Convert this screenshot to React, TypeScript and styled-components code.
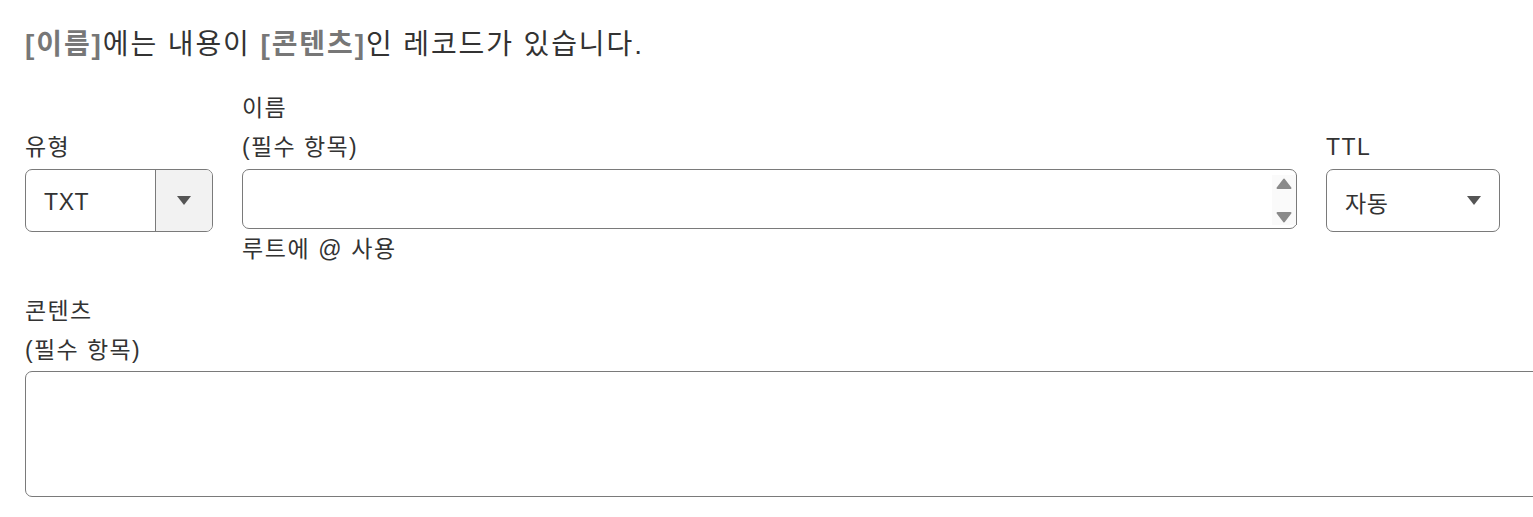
import React from "react";
import styled, { createGlobalStyle } from "styled-components";

const GlobalStyle = createGlobalStyle`
  html, body {
    margin: 0;
    padding: 0;
    overflow: hidden;
    background: #ffffff;
  }
  body {
    font-family: "Liberation Sans", "Noto Sans CJK KR", sans-serif;
    color: #333333;
  }
`;

interface ISelectBox {
  value: string;
  width: number;
  split?: boolean;
}

function SelectBox({ value, width, split }: ISelectBox) {
  return (
    <S.Select $width={width}>
      <span className="select__value">{value}</span>
      <S.SelectArrow $split={split}>
        <svg width="14" height="9" viewBox="0 0 14 9">
          <path d="M0 0 L14 0 L7 9 Z" fill="#555555" />
        </svg>
      </S.SelectArrow>
    </S.Select>
  );
}

export default function App() {
  return (
    <>
      <GlobalStyle />
      <S.Page>
        <S.Heading>
          <b>[이름]</b>에는 내용이 <b>[콘텐츠]</b>인 레코드가 있습니다.
        </S.Heading>
        <S.FieldGrid>
          <S.Label $col={1}>유형</S.Label>
          <S.Label $col={2}>
            이름
            <br />
            (필수 항목)
          </S.Label>
          <S.Label $col={3}>TTL</S.Label>

          <SelectBox value="TXT" width={188} split />
          <S.NameInput>
            <S.Spinner>
              <svg width="16" height="11" viewBox="0 0 16 11">
                <path d="M1.5 10 L8 1.5 L14.5 10 Z" fill="#8a8a8a" strokeLinejoin="round" stroke="#8a8a8a" strokeWidth="2" />
              </svg>
              <svg width="16" height="11" viewBox="0 0 16 11">
                <path d="M1.5 1 L14.5 1 L8 9.5 Z" fill="#8a8a8a" strokeLinejoin="round" stroke="#8a8a8a" strokeWidth="2" />
              </svg>
            </S.Spinner>
          </S.NameInput>
          <SelectBox value="자동" width={174} />

          <S.Hint>루트에 @ 사용</S.Hint>
        </S.FieldGrid>

        <S.ContentField>
          <S.Label>
            콘텐츠
            <br />
            (필수 항목)
          </S.Label>
          <S.TextArea />
        </S.ContentField>
      </S.Page>
    </>
  );
}

const S = {
  Page: styled.div`
    padding: 27px 0 0 25px;
    width: 1600px;
  `,
  Heading: styled.div`
    font-size: 28px;
    line-height: 36px;
    letter-spacing: 1.9px;
    color: #333333;
    b {
      color: #777777;
      font-weight: 700;
    }
  `,
  FieldGrid: styled.div`
    display: grid;
    grid-template-columns: 188px 1055px 174px;
    column-gap: 29px;
    margin-top: 26px;
  `,
  Label: styled.div<{ $col?: number }>`
    align-self: ${(p) => (p.$col ? "end" : "flex-start")};
    grid-row: ${(p) => (p.$col ? 1 : "auto")};
    grid-column: ${(p) => p.$col ?? "auto"};
    font-size: 23px;
    line-height: 39px;
    letter-spacing: 1.4px;
    color: #333333;
    padding-bottom: 2px;
  `,
  Select: styled.div<{ $width: number }>`
    grid-row: 2;
    width: ${(p) => p.$width}px;
    height: 63px;
    box-sizing: border-box;
    border: 1px solid #7a7a7a;
    border-radius: 7px;
    display: flex;
    align-items: stretch;
    overflow: hidden;
    .select__value {
      flex: 1;
      display: flex;
      align-items: center;
      padding: 3px 0 0 18px;
      font-size: 23px;
      letter-spacing: 0.6px;
      color: #333333;
    }
  `,
  SelectArrow: styled.div<{ $split?: boolean }>`
    width: ${(p) => (p.$split ? "56px" : "50px")};
    display: flex;
    align-items: center;
    justify-content: center;
    background: ${(p) => (p.$split ? "#f2f2f2" : "transparent")};
    border-left: ${(p) => (p.$split ? "1px solid #7a7a7a" : "none")};
  `,
  NameInput: styled.div`
    grid-row: 2;
    position: relative;
    height: 60px;
    box-sizing: border-box;
    border: 1px solid #7a7a7a;
    border-radius: 7px;
  `,
  Spinner: styled.div`
    position: absolute;
    top: 5px;
    bottom: 3px;
    right: -1px;
    width: 25px;
    background: #fafafa;
    border-right: 1px solid #7a7a7a;
    display: flex;
    flex-direction: column;
    justify-content: space-between;
    align-items: center;
    padding: 3px 0 2px;
    box-sizing: border-box;
  `,
  Hint: styled.div`
    grid-row: 3;
    grid-column: 2;
    font-size: 23px;
    line-height: 34px;
    letter-spacing: 1.6px;
    color: #333333;
  `,
  ContentField: styled.div`
    margin-top: 26px;
    display: flex;
    flex-direction: column;
  `,
  TextArea: styled.div`
    width: 1560px;
    height: 126px;
    box-sizing: border-box;
    border: 1px solid #7a7a7a;
    border-radius: 7px;
    margin-top: -1px;
  `,
};
